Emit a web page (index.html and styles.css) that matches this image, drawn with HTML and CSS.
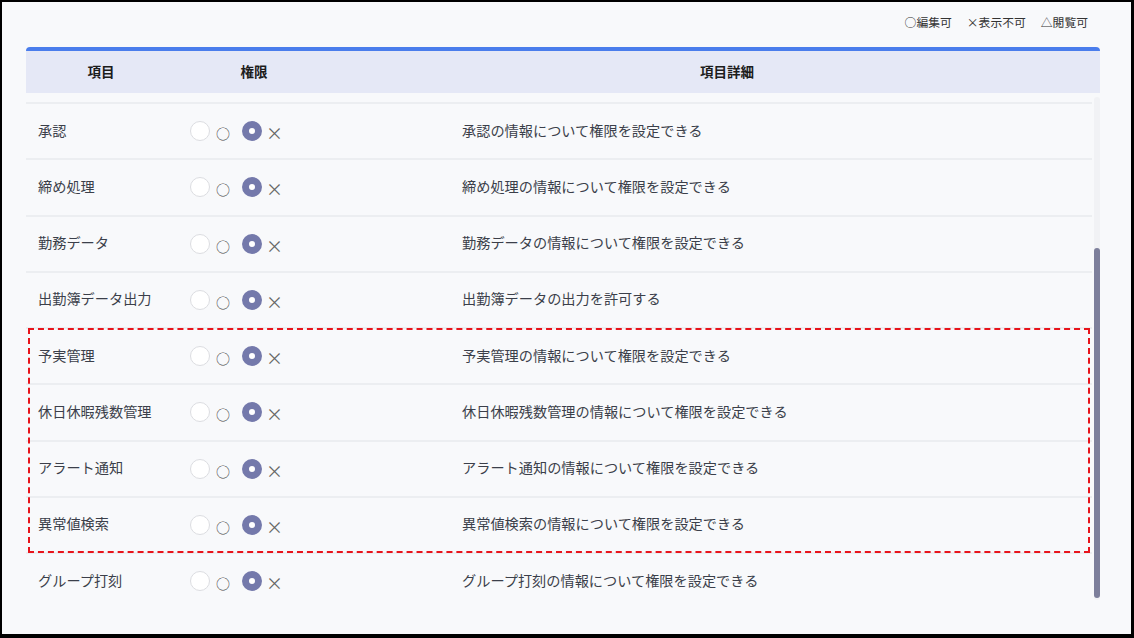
FILE: index.html
```html
<!DOCTYPE html>
<html lang="ja">
<head>
  <meta charset="UTF-8" />
  <title>権限設定</title>
  <link rel="stylesheet" href="styles.css">
</head>
<body>
  <div class="frame">
    <div class="legend">
      <span>○編集可</span>
      <span>×表示不可</span>
      <span>△閲覧可</span>
    </div>

    <div class="panel">
      <div class="head">
        <div>項目</div>
        <div>権限</div>
        <div class="head-detail">項目詳細</div>
      </div>

      <div class="list">
        <div class="tail"></div>

        <div class="row">
          <div class="name">承認</div>
          <div class="perm">
            <input type="radio" name="p1"><span class="mark-o">○</span>
            <input type="radio" name="p1" checked><span class="mark-x">×</span>
          </div>
          <div class="detail">承認の情報について権限を設定できる</div>
        </div>

        <div class="row">
          <div class="name">締め処理</div>
          <div class="perm">
            <input type="radio" name="p2"><span class="mark-o">○</span>
            <input type="radio" name="p2" checked><span class="mark-x">×</span>
          </div>
          <div class="detail">締め処理の情報について権限を設定できる</div>
        </div>

        <div class="row">
          <div class="name">勤務データ</div>
          <div class="perm">
            <input type="radio" name="p3"><span class="mark-o">○</span>
            <input type="radio" name="p3" checked><span class="mark-x">×</span>
          </div>
          <div class="detail">勤務データの情報について権限を設定できる</div>
        </div>

        <div class="row">
          <div class="name">出勤簿データ出力</div>
          <div class="perm">
            <input type="radio" name="p4"><span class="mark-o">○</span>
            <input type="radio" name="p4" checked><span class="mark-x">×</span>
          </div>
          <div class="detail">出勤簿データの出力を許可する</div>
        </div>

        <div class="highlight">
          <div class="row">
            <div class="name">予実管理</div>
            <div class="perm">
              <input type="radio" name="p5"><span class="mark-o">○</span>
              <input type="radio" name="p5" checked><span class="mark-x">×</span>
            </div>
            <div class="detail">予実管理の情報について権限を設定できる</div>
          </div>

          <div class="row">
            <div class="name">休日休暇残数管理</div>
            <div class="perm">
              <input type="radio" name="p6"><span class="mark-o">○</span>
              <input type="radio" name="p6" checked><span class="mark-x">×</span>
            </div>
            <div class="detail">休日休暇残数管理の情報について権限を設定できる</div>
          </div>

          <div class="row">
            <div class="name">アラート通知</div>
            <div class="perm">
              <input type="radio" name="p7"><span class="mark-o">○</span>
              <input type="radio" name="p7" checked><span class="mark-x">×</span>
            </div>
            <div class="detail">アラート通知の情報について権限を設定できる</div>
          </div>

          <div class="row">
            <div class="name">異常値検索</div>
            <div class="perm">
              <input type="radio" name="p8"><span class="mark-o">○</span>
              <input type="radio" name="p8" checked><span class="mark-x">×</span>
            </div>
            <div class="detail">異常値検索の情報について権限を設定できる</div>
          </div>
        </div>

        <div class="row">
          <div class="name">グループ打刻</div>
          <div class="perm">
            <input type="radio" name="p9"><span class="mark-o">○</span>
            <input type="radio" name="p9" checked><span class="mark-x">×</span>
          </div>
          <div class="detail">グループ打刻の情報について権限を設定できる</div>
        </div>

        <div class="scroll-track"><div class="scroll-thumb"></div></div>
      </div>
    </div>
  </div>
</body>
</html>
```

FILE: styles.css
```css
html, body {
  margin: 0;
  padding: 0;
}

body {
  font-family: "Noto Sans CJK JP", "Noto Sans", sans-serif;
  background-color: #000;
  color: #3b3f4a;
}

.frame {
  box-sizing: border-box;
  width: 1134px;
  height: 638px;
  margin: 0;
  border: 2px solid #000;
  border-bottom-width: 4px;
  border-right-width: 3px;
  background-color: #f8f9fb;
  overflow: hidden;
}

.legend {
  display: flex;
  justify-content: flex-end;
  gap: 15px;
  height: 40px;
  padding: 11px 43px 0 0;
  box-sizing: border-box;
  font-size: 11.8px;
  color: #333;
  margin-bottom: 5px;
}

.panel {
  margin-left: 24px;
  width: 1074px;
}

.head {
  display: grid;
  grid-template-columns: 150px 156px 1fr;
  height: 46px;
  padding-bottom: 3px;
  box-sizing: border-box;
  align-items: center;
  text-align: center;
  background-color: #e5e8f6;
  border-top: 4px solid #4a7dec;
  border-radius: 4px 4px 0 0;
  font-size: 13.5px;
  font-weight: bold;
  color: #1c1c1c;
}

.head-detail {
  padding-left: 22px;
}

.list {
  position: relative;
  width: 1066px;
  height: 514px;
}

.tail {
  height: 9px;
}

.row {
  display: grid;
  grid-template-columns: 164px 272px 1fr;
  align-items: center;
  height: 56.25px;
  padding-bottom: 3px;
  box-sizing: border-box;
  border-top: 2px solid #eceef1;
  font-size: 14.2px;
}

.name {
  padding-left: 12px;
}

.perm {
  display: flex;
  align-items: center;
  padding-top: 3px;
}

.perm input {
  appearance: none;
  -webkit-appearance: none;
  width: 20px;
  height: 20px;
  margin: 0;
  border-radius: 50%;
  border: 1.5px solid #dcdde1;
  background-color: #fff;
  box-sizing: border-box;
}

.perm input:checked {
  border: 7px solid #7479ab;
  background-color: #fff;
}

.mark-o {
  font-size: 14px;
  margin: 4px 12px 0 6px;
  color: #444;
}

.mark-x {
  font-size: 17px;
  margin: 3px 0 0 4px;
  color: #666;
}

.highlight {
  position: relative;
}

.highlight::after {
  content: "";
  position: absolute;
  top: 1px;
  left: 2px;
  right: 2px;
  bottom: -1px;
  border: 2px dashed #e8141b;
  pointer-events: none;
}

.scroll-track {
  position: absolute;
  top: 4px;
  right: -8px;
  width: 6px;
  height: 503px;
  background-color: #f1f2f5;
  border-radius: 3px;
}

.scroll-thumb {
  margin-top: 151px;
  height: 350px;
  background-color: #7d7f9b;
  border-radius: 3px;
}
```
